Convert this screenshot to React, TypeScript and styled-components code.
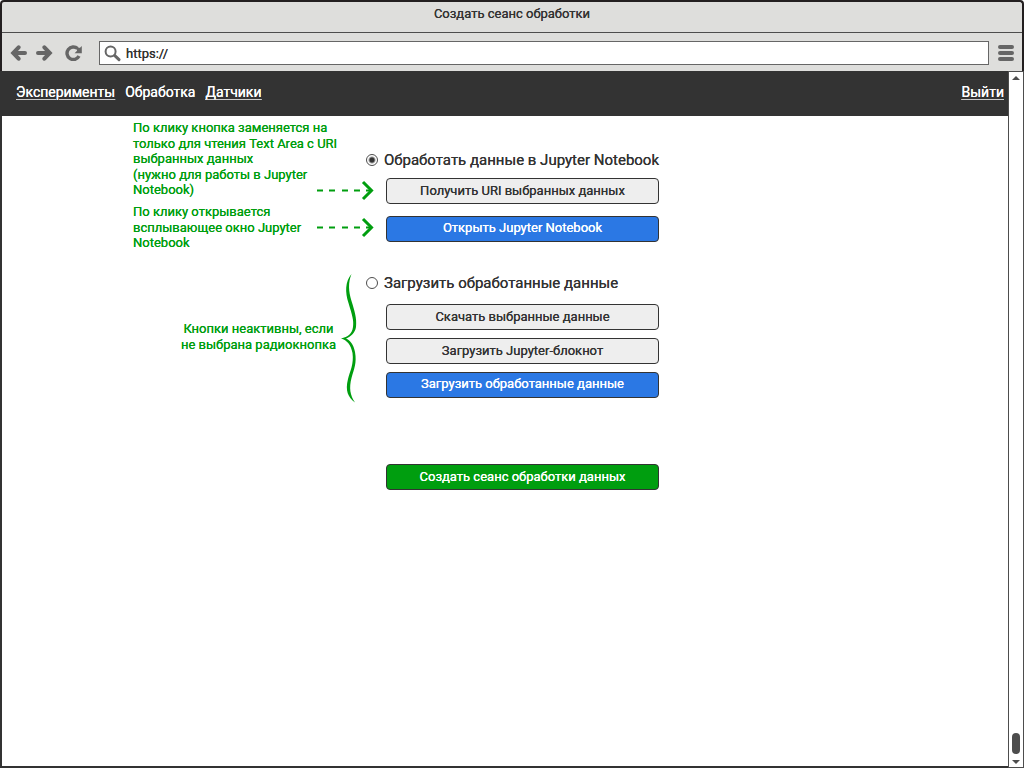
import React from 'react';
import styled, { createGlobalStyle, css } from 'styled-components';

const ink = '#333333';
const green = '#009e0f';
const chromeGrey = '#dededc';
const iconGrey = '#666666';

/* The zero-offset shadow gives the regular weight a slightly fuller stroke. */
const GlobalStyle = createGlobalStyle`
  *, *::before, *::after { box-sizing: border-box; }
  body {
    margin: 0;
    background: #ffffff;
    color: ${ink};
    font-family: Roboto, "Liberation Sans", sans-serif;
    font-size: 13px;
    font-weight: 400;
    line-height: 1.2;
    text-shadow: 0 0 0 currentColor;
  }
  button, input { font: inherit; color: inherit; text-shadow: 0 0 0 currentColor; }
  svg { display: block; flex: none; }
`;

const Window = styled.div`
  display: flex;
  flex-direction: column;
  min-height: 100vh;
`;

const Chrome = styled.header`
  background: ${chromeGrey};
  border: 2px solid #231f20;
  border-bottom: 0;
  border-radius: 4px 4px 0 0;
`;

const TitleBar = styled.h1`
  display: flex;
  align-items: center;
  justify-content: center;
  height: 31px;
  margin: 0;
  padding-bottom: 6px;
  border-bottom: 1px solid #4d4d4d;
  font-size: 13px;
  font-weight: 400;
`;

const Toolbar = styled.div`
  display: flex;
  align-items: center;
  gap: 9px;
  height: 38px;
  padding: 2px 8px 0;
`;

const ToolButton = styled.button`
  padding: 0;
  border: 0;
  background: none;
`;

const AddressBar = styled.label`
  display: flex;
  flex: 1;
  align-items: center;
  gap: 5px;
  height: 24px;
  margin-left: 7px;
  padding-left: 4px;
  background: #ffffff;
  border: 1px solid #666666;
`;

const AddressInput = styled.input`
  flex: 1;
  min-width: 0;
  padding: 1px 0 0;
  border: 0;
  outline: 0;
  background: none;
`;

const Body = styled.div`
  display: flex;
  flex: 1;
`;

const Viewport = styled.div`
  flex: 1;
  min-width: 0;
  border: solid ${ink};
  border-width: 0 0 2px 2px;
`;

const Nav = styled.nav`
  display: flex;
  align-items: center;
  gap: 10px;
  height: 45px;
  padding: 0 4px 2px 14px;
  background: ${ink};
  color: #ffffff;
  font-size: 14px;
`;

const NavLink = styled.a<{ $current?: boolean; $end?: boolean }>`
  color: inherit;
  text-decoration: ${p => (p.$current ? 'none' : 'underline')};
  text-decoration-color: #cccccc;
  text-decoration-thickness: 1px;
  text-underline-offset: 2px;
  ${p => p.$end && css`margin-left: auto;`}
`;

const Main = styled.main`
  display: flex;
  align-items: flex-start;
  padding-left: 131px;
`;

/* The arrows reach a little way into the indent of the form's buttons. */
const Notes = styled.aside`
  flex: none;
  width: 241px;
  margin-right: -8px;
  padding-top: 4px;
  color: ${green};
`;

const Note = styled.div<{ $align: string }>`
  display: flex;
  justify-content: space-between;
  align-items: ${p => p.$align};
  margin-bottom: 6px;
`;

const NoteText = styled.p`
  margin: 0;
  white-space: nowrap;
`;

const NoteBody = styled.div`
  width: 184px;
`;

const BraceNote = styled.div`
  display: flex;
  align-items: center;
  justify-content: flex-end;
  gap: 5px;
  margin: 22px 17px 0 0;
  text-align: center;

  ${NoteText} { padding-bottom: 2px; }
`;

const Form = styled.form`
  flex: none;
  width: 293px;
  padding-top: 34px;
`;

const Group = styled.fieldset`
  min-width: 0;
  margin: 0 0 31px;
  padding: 0;
  border: 0;
`;

const Choice = styled.label<{ $gap: number }>`
  display: flex;
  align-items: center;
  gap: 6px;
  height: 20px;
  margin-bottom: ${p => p.$gap}px;
  font-size: 15px;
  white-space: nowrap;
`;

const Radio = styled.input`
  appearance: none;
  flex: none;
  width: 12px;
  height: 12px;
  margin: 0;
  border: 1px solid #4d4d4d;
  border-radius: 50%;
  background: #ffffff;

  &:checked {
    background: radial-gradient(circle, ${ink} 2px, #ffffff 4px);
  }
`;

const Buttons = styled.div<{ $gap: number }>`
  display: flex;
  flex-direction: column;
  gap: ${p => p.$gap}px;
  padding-left: 20px;
`;

const tones = {
  plain: css`background: #eeeeee; color: ${ink};`,
  primary: css`background: #2b78e4; color: #ffffff; padding-bottom: 2px;`,
  submit: css`background: ${green}; color: #ffffff;`,
};

const Button = styled.button<{ $tone: keyof typeof tones }>`
  height: 26px;
  padding: 0 8px;
  border: 1px solid ${ink};
  border-radius: 4px;
  ${p => tones[p.$tone]}
`;

const Submit = styled.div`
  padding: 35px 0 0 20px;
  display: grid;
`;

const ScrollTrack = styled.div`
  display: flex;
  flex-direction: column;
  align-items: center;
  width: 16px;
  padding: 4px 0 3px;
  background: #ffffff;
  border: 1px solid #4d4d4d;
`;

const ScrollThumb = styled.div`
  width: 8px;
  height: 21px;
  margin: auto 0 6px;
  border-radius: 4px;
  background: #4d4d4d;
`;

const BackIcon = () => (
  <svg width="17" height="16" viewBox="0 0 17 16" fill="none" stroke={iconGrey} strokeWidth="4" strokeLinecap="round">
    <path d="M8.600 2.300L3.200 8L8.600 13.700M3.800 8H15" />
  </svg>
);

const ForwardIcon = () => (
  <svg width="17" height="16" viewBox="0 0 17 16" fill="none" stroke={iconGrey} strokeWidth="4" strokeLinecap="round">
    <path d="M8.400 2.300L13.800 8L8.400 13.700M13.200 8H2" />
  </svg>
);

const ReloadIcon = () => (
  <svg width="21" height="16" viewBox="0 0 21 16">
    <path d="M17 11A6.300 6.300 0 1 1 15.600 3.600" fill="none" stroke={iconGrey} strokeWidth="3.4" />
    <path d="M19.800 1V8.200H12.600L15 5.800V3L18 2.800Z" fill={iconGrey} />
  </svg>
);

const SearchIcon = () => (
  <svg width="17" height="17" viewBox="0 0 17 17" fill="none" stroke={iconGrey}>
    <circle cx="6.6" cy="6.4" r="5" strokeWidth="2" />
    <path d="M10.8 10.6L15 14.6" strokeWidth="3" strokeLinecap="round" />
  </svg>
);

const MenuIcon = () => (
  <svg width="16" height="16" viewBox="0 0 16 16" stroke={iconGrey} strokeWidth="4" strokeLinecap="round">
    <path d="M2 2H14M2 8H14M2 14H14" />
  </svg>
);

const DashedArrow = () => (
  <svg width="57" height="16" viewBox="0 0 57 16" overflow="visible" fill="none" stroke={green}>
    <path d="M0 8.500H6M12 8.500H18M25 8.500H31M37 8.500H43M49 8.500H54" strokeWidth="2" />
    <path d="M46 0L54.500 8.500L46 17" strokeWidth="3" />
  </svg>
);

const Brace = () => (
  <svg width="16" height="130" viewBox="0 0 16 130" fill={green}>
    <path d="M10.500 1C4 9 4 19 7.500 30C11 42 13 47 12 54C11 61 7 64 0 65.500C6 67 10 72 11.500 80C13 91 9 98 7 106C4 118 7 124 14 129.500C9 122 8 115 10.500 105C13 96 16 90 14 79C12.500 71 9 67.500 5 65.500C10 63.500 14 60 15 54C16 45 13.500 38 10.500 28C7.500 18 7 10 10.500 1Z" />
  </svg>
);

const Caret = ({ down = false }: { down?: boolean }) => (
  <svg width="8" height="4" viewBox="0 0 8 4" fill="#4d4d4d">
    <path d={down ? 'M0 0H8L4 4Z' : 'M0 4H8L4 0Z'} />
  </svg>
);

export default function App() {
  return (
    <Window>
      <GlobalStyle />
      <Chrome>
        <TitleBar>Создать сеанс обработки</TitleBar>
        <Toolbar>
          <ToolButton type="button" aria-label="Назад"><BackIcon /></ToolButton>
          <ToolButton type="button" aria-label="Вперёд"><ForwardIcon /></ToolButton>
          <ToolButton type="button" aria-label="Обновить"><ReloadIcon /></ToolButton>
          <AddressBar>
            <SearchIcon />
            <AddressInput type="text" aria-label="Адрес" defaultValue="https://" />
          </AddressBar>
          <ToolButton type="button" aria-label="Меню"><MenuIcon /></ToolButton>
        </Toolbar>
      </Chrome>
      <Body>
        <Viewport>
          <Nav>
            <NavLink href="#experiments">Эксперименты</NavLink>
            <NavLink href="#processing" $current>Обработка</NavLink>
            <NavLink href="#sensors">Датчики</NavLink>
            <NavLink href="#logout" $end>Выйти</NavLink>
          </Nav>
          <Main>
            <Notes>
              <Note $align="flex-end">
                <NoteBody>
                  <NoteText>
                    По клику кнопка заменяется на<br />
                    только для чтения Text Area с URI<br />
                    выбранных данных<br />
                    (нужно для работы в Jupyter<br />
                    Notebook)
                  </NoteText>
                </NoteBody>
                <DashedArrow />
              </Note>
              <Note $align="center">
                <NoteBody>
                  <NoteText>
                    По клику открывается<br />
                    всплывающее окно Jupyter<br />
                    Notebook
                  </NoteText>
                </NoteBody>
                <DashedArrow />
              </Note>
              <BraceNote>
                <NoteText>
                  Кнопки неактивны, если<br />
                  не выбрана радиокнопка
                </NoteText>
                <Brace />
              </BraceNote>
            </Notes>
            <Form onSubmit={e => e.preventDefault()}>
              <Group>
                <Choice $gap={8}>
                  <Radio type="radio" name="mode" value="notebook" defaultChecked />
                  Обработать данные в Jupyter Notebook
                </Choice>
                <Buttons $gap={12}>
                  <Button type="button" $tone="plain">Получить URI выбранных данных</Button>
                  <Button type="button" $tone="primary">Открыть Jupyter Notebook</Button>
                </Buttons>
              </Group>
              <Group>
                <Choice $gap={11}>
                  <Radio type="radio" name="mode" value="upload" />
                  Загрузить обработанные данные
                </Choice>
                <Buttons $gap={8}>
                  <Button type="button" $tone="plain">Скачать выбранные данные</Button>
                  <Button type="button" $tone="plain">Загрузить Jupyter-блокнот</Button>
                  <Button type="button" $tone="primary">Загрузить обработанные данные</Button>
                </Buttons>
              </Group>
              <Submit>
                <Button type="submit" $tone="submit">Создать сеанс обработки данных</Button>
              </Submit>
            </Form>
          </Main>
        </Viewport>
        <ScrollTrack>
          <Caret />
          <ScrollThumb />
          <Caret down />
        </ScrollTrack>
      </Body>
    </Window>
  );
}
